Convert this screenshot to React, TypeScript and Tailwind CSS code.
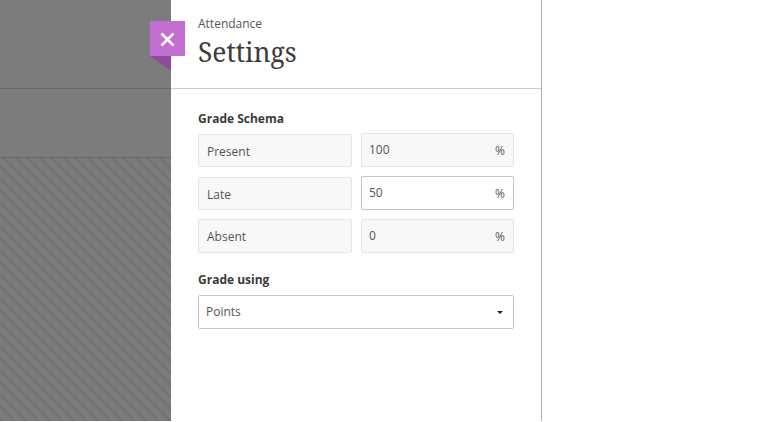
export default function App() {
  const sans = "font-['Open_Sans',sans-serif]";
  const rows = [
    { label: "Present", value: "100", active: false, labelH: "h-[33px]" },
    { label: "Late", value: "50", active: true, labelH: "h-[33px]" },
    { label: "Absent", value: "0", active: false, labelH: "h-[34px]" },
  ];
  return (
    <div className={`flex h-[422px] w-[779px] overflow-hidden bg-white ${sans}`}>
      <div className="flex h-[421px] w-[171px] shrink-0 flex-col bg-[#7c7c7c]">
        <div className="h-[88px] shrink-0 border-b border-[#6b6b6b] box-content" />
        <div className="h-[68px] shrink-0 border-b border-[#6b6b6b] box-content" />
        <div className="flex-1 bg-[repeating-linear-gradient(45deg,#747474_0px,#747474_3px,#7c7c7c_3px,#7c7c7c_8.5px)]" />
      </div>
      <div className="relative flex h-[421px] w-[371px] shrink-0 flex-col border-r border-[#b0b0b0] bg-white">
        <button className="absolute left-[-21px] top-[21px] flex h-[35px] w-[35px] items-center justify-center bg-[#c36ed2]">
          <svg className="translate-y-[1px]" width="15" height="15" viewBox="0 0 15 15" fill="none">
            <path d="M1.5 1.5L13.5 13.5M13.5 1.5L1.5 13.5" stroke="#ffffff" strokeWidth="2.5" />
          </svg>
        </button>
        <svg className="absolute left-[-21px] top-[56px]" width="21" height="15" viewBox="0 0 21 15">
          <path d="M0 0H21V15Z" fill="#8e4a9b" />
        </svg>
        <header className="h-[89px] shrink-0 border-b border-[#cdcdcd] pl-[27px] pt-[16px]">
          <div className="text-[12px] leading-[16px] text-[#555555]">Attendance</div>
          <h1 className="mt-[4px] font-['Noto_Serif','DejaVu_Serif',serif] text-[26.4px] leading-[32px] font-normal text-[#3c3c3c]">
            Settings
          </h1>
        </header>
        <main className="flex flex-col pl-[27px] pr-[27px] pt-[22px]">
          <h2 className="text-[12px] leading-[16px] font-bold text-[#3a3a3a]">Grade Schema</h2>
          <div className="mt-[6px] flex flex-col gap-[9px]">
            {rows.map((r) => (
              <div key={r.label} className="flex items-end gap-[9px]">
                <div className={`flex ${r.labelH} w-[154px] items-center rounded-[2px] border border-[#e5e5e5] bg-[#f8f8f8] pl-[8px] text-[12px] leading-[16px] text-[#555555]`}>
                  <span className="translate-y-[1px]">{r.label}</span>
                </div>
                <div
                  className={`flex h-[34px] w-[153px] items-center justify-between rounded-[2px] border pl-[7px] pr-[8px] text-[12px] text-[#555555] ${
                    r.active ? "border-[#c4c4c4] bg-white" : "border-[#e5e5e5] bg-[#f8f8f8]"
                  }`}
                >
                  <span>{r.value}</span>
                  <span className="translate-y-[1px]">%</span>
                </div>
              </div>
            ))}
          </div>
          <h2 className="mt-[19px] text-[12px] leading-[16px] font-bold text-[#3a3a3a]">Grade using</h2>
          <div className="mt-[7px] flex h-[34px] w-[316px] items-center justify-between rounded-[2px] border border-[#c4c4c4] bg-white pl-[7px] pr-[10px] text-[12px] text-[#555555]">
            <span>Points</span>
            <svg width="6" height="3" viewBox="0 0 6 3">
              <path d="M0 0H6L3 3Z" fill="#222222" />
            </svg>
          </div>
        </main>
      </div>
      <div className="flex-1 bg-white" />
    </div>
  );
}
